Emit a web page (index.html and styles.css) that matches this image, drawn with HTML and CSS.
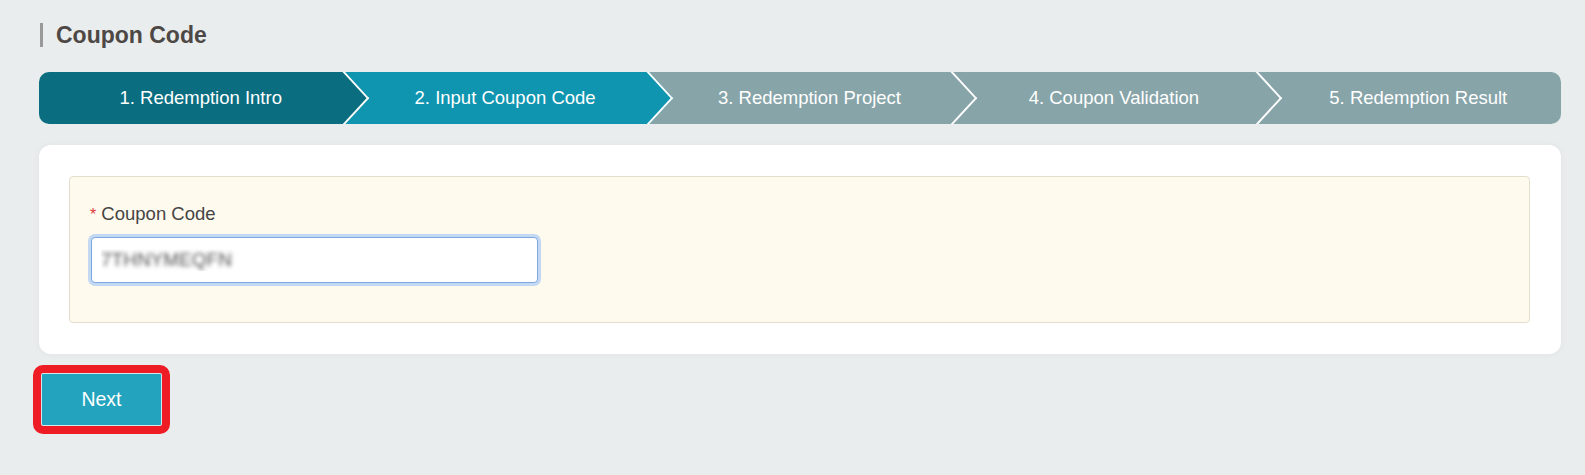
FILE: index.html
```html
<!DOCTYPE html>
<html lang="en">
<head>
    <meta charset="UTF-8">
    <meta name="viewport" content="width=device-width, initial-scale=1.0">
    <title>Coupon Code</title>
    <link rel="stylesheet" href="styles.css">
</head>
<body>
    <div class="page">
        <h1 class="page-title">Coupon Code</h1>

        <div class="steps-wrap">
            <ol class="steps">
                <li class="step done">1. Redemption Intro</li>
                <li class="step active">2. Input Coupon Code</li>
                <li class="step">3. Redemption Project</li>
                <li class="step">4. Coupon Validation</li>
                <li class="step">5. Redemption Result</li>
            </ol>
        </div>

        <div class="card">
            <div class="form-box">
                <label for="couponCode"><span class="required">*</span> Coupon Code</label>
                <input type="text" id="couponCode" class="code-input" value="7THNYMEQFN" spellcheck="false">
            </div>
        </div>

        <button type="button" class="btn-next">Next</button>
    </div>
</body>
</html>
```

FILE: styles.css
```css
* {
    margin: 0;
    padding: 0;
    box-sizing: border-box;
    font-family: 'Liberation Sans', Arial, sans-serif;
}

html {
    overflow: hidden;
}

body {
    background: #e9edee;
}

.page {
    padding: 22px 24px 20px 39px;
}

.page-title {
    display: flex;
    align-items: center;
    gap: 13px;
    font-size: 23px;
    line-height: 26px;
    font-weight: bold;
    color: #4d4845;
}

.page-title::before {
    content: '';
    width: 3px;
    height: 24px;
    margin-left: 1px;
    background: #999;
}

/* step bar */
.steps-wrap {
    margin-top: 24px;
    border-radius: 10px;
    overflow: hidden;
}

.steps {
    list-style: none;
    display: grid;
    grid-template-columns: repeat(5, 1fr);
    height: 52px;
}

.step {
    position: relative;
    display: flex;
    align-items: center;
    justify-content: center;
    padding-left: 19px;
    background: #87a4a9;
    color: #fff;
    font-size: 18.5px;
    white-space: nowrap;
}

.step.done { background: #0a6e80; }
.step.active { background: #0f95b0; }

.step:not(:last-child)::after {
    content: '';
    position: absolute;
    top: 50%;
    right: 0;
    width: 36.8px;
    height: 36.8px;
    background: inherit;
    border-top: 2px solid #fff;
    border-right: 2px solid #fff;
    transform: translate(50%, -50%) scaleX(0.92) rotate(45deg);
    z-index: 1;
}

/* form card */
.card {
    margin-top: 21px;
    background: #fff;
    border-radius: 12px;
    padding: 31px 31px 31px 30px;
    box-shadow: 0 0 8px rgba(0, 0, 0, 0.04);
}

.form-box {
    background: #fffaee;
    border: 1px solid #e4dfcc;
    border-radius: 4px;
    padding: 26px 20px 39px;
}

label {
    display: block;
    font-size: 18.5px;
    line-height: 22px;
    color: #444;
}

.required {
    color: #e03a3a;
    font-size: 16px;
}

.code-input {
    display: block;
    margin-top: 11px;
    margin-left: 1px;
    width: 447px;
    height: 46px;
    padding: 0 9px;
    border: 1px solid #7ea8e0;
    border-radius: 4px;
    box-shadow: 0 0 0 3px #c3d8f2;
    background: #fff;
    font-size: 19px;
    color: transparent;
    text-shadow: 0 0 4px rgba(70, 70, 70, 0.9);
    outline: none;
}

.btn-next {
    display: block;
    margin-top: 19px;
    margin-left: 2px;
    width: 121px;
    height: 53px;
    background: #23a3bd;
    color: #fff;
    border: 1px solid #cfe9ef;
    border-radius: 2px;
    outline: 8px solid #ee1c25;
    outline-offset: 0;
    font-size: 19.5px;
    cursor: pointer;
}
```
